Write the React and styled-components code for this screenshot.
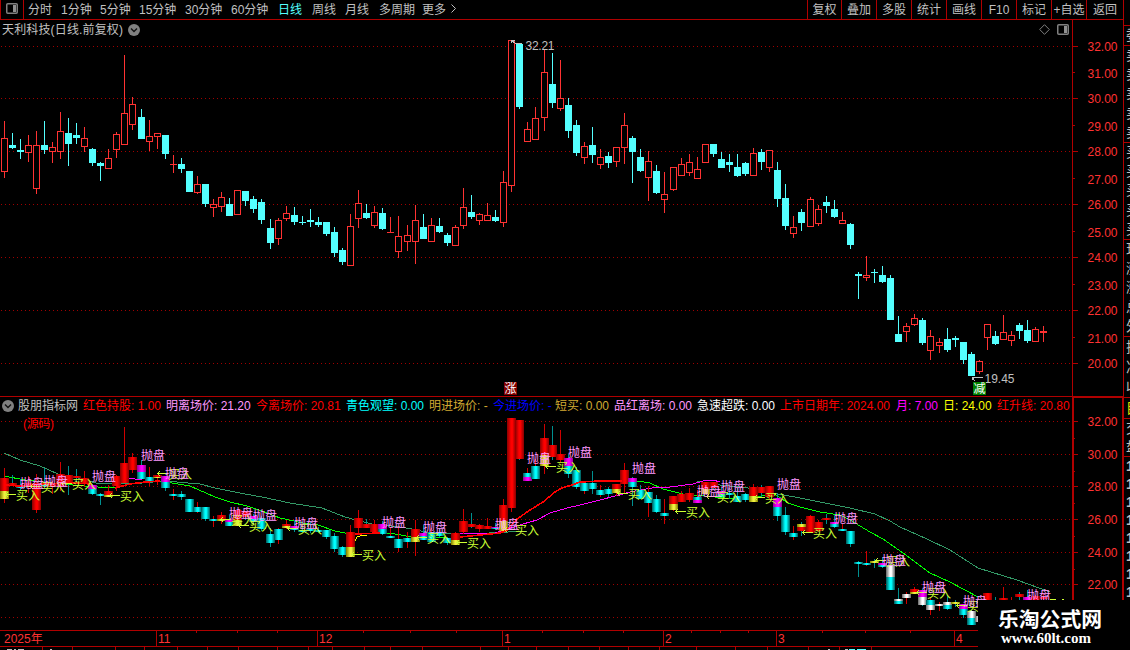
import React from 'react';
import styled, { createGlobalStyle } from 'styled-components';

const GlobalStyle = createGlobalStyle`
  body {
    margin: 0;
    background: #000;
    overflow: hidden;
  }
`;

const LINE = '#b00000';
const UP = '#ff3232';
const DOWN = '#54ffff';

const Window = styled.div`
  position: relative;
  display: flex;
  width: 1130px;
  height: 650px;
  overflow: hidden;
  background: #000;
  color: #c0c0c0;
  font: 12px/18px 'Liberation Sans', 'Noto Sans CJK SC', sans-serif;
  white-space: pre;
`;

const Main = styled.div`
  display: flex;
  flex-direction: column;
  width: 1123px;
`;

const Toolbar = styled.div`
  display: flex;
  box-sizing: border-box;
  height: 20px;
  padding-top: 1px;
  border-bottom: 1px solid ${LINE};
`;

const PanelToggle = styled.div`
  display: flex;
  align-items: center;
  justify-content: center;
  box-sizing: border-box;
  width: 24px;
  margin: -1px 4px 0 0;
  padding-bottom: 2px;
  border: solid ${LINE};
  border-width: 0 1px;
`;

const Period = styled.span`
  width: ${props => props.width}px;
  color: ${props => (props.active ? DOWN : 'inherit')};
`;

const Actions = styled.div`
  display: flex;
  margin: -1px 0 0 auto;
`;

const Action = styled.span`
  box-sizing: border-box;
  width: ${props => props.width || 35}px;
  padding-top: 1px;
  border-left: 1px solid ${LINE};
  text-align: center;
`;

const TitleBar = styled.div`
  display: flex;
  align-items: center;
  gap: 5px;
  box-sizing: border-box;
  width: 1073px;
  height: 20px;
  padding: 0 3px 1px 2px;
  border-right: 1px solid ${LINE};
`;

const Title = styled.span`
  letter-spacing: 0.15px;
`;

const TitleIcons = styled.div`
  display: flex;
  align-items: center;
  gap: 7px;
  margin-left: auto;
`;

const Chart = styled.svg`
  display: block;
  flex: none;
  font: 12px 'Liberation Sans', 'Noto Sans CJK SC', sans-serif;
`;

const Legend = styled.div`
  display: flex;
  align-items: center;
  box-sizing: border-box;
  width: 1074px;
  height: 18px;
  padding: 0 0 1px 2px;
  border-right: 2px solid ${LINE};
`;

const LegendItem = styled.span`
  flex: none;
  width: ${props => props.width}px;
  color: ${props => props.color};
`;

const LegendRow = styled.div`
  display: flex;
  height: 18px;
  flex: none;
`;

const AxisTop = styled.div`
  flex: 1;
  box-sizing: border-box;
  border: solid ${LINE};
  border-width: 1px 1px 0 0;
`;

const DateAxis = styled.div`
  display: flex;
  box-sizing: border-box;
  height: 17px;
  border: solid ${LINE};
  border-width: 1px 0;
  color: ${UP};
  line-height: 16px;
`;

const Month = styled.span`
  box-sizing: border-box;
  width: ${props => props.width}px;
  padding-left: ${props => (props.first ? 4 : 1)}px;
  border-left: ${props => (props.first ? 'none' : `1px solid ${LINE}`)};
`;

const Strip = styled.div`
  display: flex;
  flex-direction: column;
  box-sizing: border-box;
  width: 7px;
  overflow: hidden;
  border-left: 1px solid ${LINE};
`;

const StripGroup = styled.div`
  display: flex;
  flex-direction: column;
  justify-content: space-around;
  flex: none;
  box-sizing: border-box;
  height: ${props => props.height}px;
  padding-left: 2px;
  border-bottom: 1px solid ${LINE};
  color: ${props => props.color || '#c0c0c0'};
  font-size: 14px;
  font-weight: ${props => (props.bold ? 'bold' : 'normal')};
  line-height: 17px;
`;

const Watermark = styled.div`
  position: absolute;
  left: 978px;
  top: 600px;
  display: flex;
  flex-direction: column;
  box-sizing: border-box;
  width: 152px;
  height: 50px;
  padding: 7px 0 0 20px;
  background: #000;
  color: #fff;
`;

const SiteName = styled.span`
  font: bold 20.8px/23px 'Noto Sans CJK SC', sans-serif;
`;

const SiteUrl = styled.span`
  padding-left: 3px;
  font: bold 15px/17px 'Liberation Serif', serif;
`;

const periods = [
  ['分时', 33],
  ['1分钟', 39],
  ['5分钟', 39],
  ['15分钟', 46],
  ['30分钟', 46],
  ['60分钟', 47],
  ['日线', 34],
  ['周线', 33],
  ['月线', 34],
  ['多周期', 43],
  ['更多', 28],
];

const actions = ['复权', '叠加', '多股', '统计', '画线', 'F10', '标记', '+自选', '返回'];

const legend = [
  ['股朋指标网', 65, '#c0c0c0'],
  ['红色持股: 1.00', 83, '#ff0000'],
  ['明离场价: 21.20', 90, '#ff99ff'],
  ['今离场价: 20.81', 90, '#ff0000'],
  ['青色观望: 0.00', 83, '#00ffff'],
  ['明进场价: -', 64, '#d2aa32'],
  ['今进场价: -', 62, '#0000ff'],
  ['短买: 0.00', 59, '#d2aa32'],
  ['品红离场: 0.00', 83, '#ff99ff'],
  ['急速超跌: 0.00', 83, '#ffffff'],
  ['上市日期年: 2024.00', 116, '#ff0000'],
  ['月: 7.00', 47, '#ff00ff'],
  ['日: 24.00', 54, '#ffff00'],
  ['红升线: 20.80', 74, '#ff0000'],
];

// wick top, body top, body bottom, wick bottom, direction, signal colours
const candles = [
  [121, 138, 172, 178, 'r', 'RY'], [133, 145, 148, 149, 'c', 'R'],
  [139, 150, 152, 159, 'c', 'C'], [135, 145, 153, 162, 'r', 'RY'],
  [131, 145, 189, 194, 'r', 'R'], [121, 145, 150, 154, 'c', 'MC'],
  [142, 147, 152, 163, 'r', 'RY'], [112, 131, 152, 159, 'r', 'R'],
  [118, 133, 144, 166, 'c', 'R'], [123, 135, 138, 144, 'c', 'R'],
  [127, 138, 147, 152, 'r', 'R'], [148, 149, 163, 166, 'c', 'MC'],
  [162, 163, 166, 181, 'c', 'C'], [149, 158, 169, 169, 'r', 'RY'],
  [132, 134, 150, 158, 'r', 'R'], [55, 113, 145, 145, 'r', 'R'],
  [97, 104, 125, 130, 'r', 'R'], [109, 117, 139, 139, 'c', 'MC'],
  [120, 136, 142, 151, 'r', 'C'], [133, 133, 137, 149, 'r', 'RY'],
  [135, 135, 154, 159, 'c', 'MC'], [155, 164, 165, 173, 'r', 'C'],
  [158, 164, 169, 173, 'c', 'C'], [171, 171, 192, 192, 'c', 'C'],
  [176, 184, 193, 194, 'r', 'C'], [184, 184, 204, 207, 'c', 'C'],
  [199, 204, 208, 217, 'r', 'C'], [192, 197, 207, 212, 'r', 'RY'],
  [198, 204, 216, 216, 'c', 'MC'], [190, 190, 215, 215, 'r', 'RY'],
  [191, 191, 201, 206, 'c', 'R'], [196, 199, 209, 213, 'c', 'MC'],
  [199, 202, 220, 224, 'c', 'C'], [219, 228, 243, 249, 'c', 'C'],
  [218, 220, 239, 245, 'r', 'C'], [206, 213, 219, 221, 'r', 'RY'],
  [207, 215, 222, 225, 'c', 'MC'], [216, 222, 223, 225, 'c', 'C'],
  [209, 220, 222, 227, 'c', 'C'], [217, 222, 225, 227, 'c', 'C'],
  [222, 222, 234, 236, 'c', 'C'], [227, 232, 253, 257, 'c', 'C'],
  [248, 250, 262, 265, 'c', 'C'], [214, 226, 266, 266, 'r', 'RY'],
  [190, 203, 219, 228, 'r', 'R'], [204, 213, 218, 219, 'c', 'R'],
  [206, 212, 226, 228, 'r', 'R'], [208, 213, 229, 230, 'c', 'MC'],
  [217, 232, 233, 233, 'r', 'C'], [216, 236, 252, 258, 'r', 'C'],
  [225, 235, 242, 251, 'r', 'C'], [205, 220, 242, 264, 'r', 'RY'],
  [214, 227, 239, 239, 'c', 'MC'], [218, 225, 242, 242, 'r', 'C'],
  [218, 226, 232, 233, 'c', 'C'], [233, 235, 243, 246, 'c', 'C'],
  [225, 227, 246, 246, 'r', 'RY'], [188, 207, 226, 229, 'r', 'R'],
  [195, 212, 217, 219, 'c', 'R'], [213, 214, 221, 225, 'r', 'R'],
  [203, 215, 221, 221, 'r', 'R'], [210, 217, 221, 222, 'c', 'MC'],
  [171, 182, 223, 227, 'r', 'RY'], [40, 40, 186, 192, 'r', 'R'],
  [43, 44, 107, 109, 'c', 'R'], [122, 129, 142, 142, 'r', 'CM'],
  [107, 118, 140, 140, 'r', 'C'], [50, 72, 118, 131, 'r', 'RY'],
  [53, 84, 103, 108, 'c', 'R'], [60, 98, 109, 111, 'r', 'R'],
  [98, 105, 131, 138, 'c', 'MC'], [120, 125, 153, 156, 'c', 'C'],
  [142, 146, 158, 164, 'r', 'C'], [127, 145, 155, 163, 'c', 'C'],
  [149, 157, 165, 169, 'r', 'C'], [152, 156, 163, 168, 'c', 'C'],
  [147, 147, 162, 167, 'r', 'RY'], [113, 125, 148, 164, 'r', 'R'],
  [136, 138, 152, 183, 'c', 'MC'], [149, 157, 171, 172, 'c', 'C'],
  [151, 161, 178, 201, 'r', 'C'], [165, 171, 193, 194, 'c', 'C'],
  [172, 194, 200, 213, 'r', 'C'], [167, 167, 190, 191, 'r', 'RY'],
  [158, 164, 176, 176, 'r', 'R'], [154, 162, 173, 176, 'r', 'R'],
  [157, 169, 179, 179, 'r', 'CM'], [144, 144, 163, 163, 'r', 'RY'],
  [144, 144, 154, 157, 'c', 'R'], [152, 159, 168, 168, 'c', 'MC'],
  [154, 162, 165, 172, 'c', 'C'], [154, 167, 176, 177, 'c', 'C'],
  [162, 163, 174, 176, 'c', 'C'], [148, 153, 176, 176, 'r', 'RY'],
  [149, 152, 162, 170, 'c', 'R'], [150, 150, 168, 172, 'r', 'R'],
  [162, 170, 199, 207, 'c', 'MC'], [184, 198, 226, 230, 'c', 'C'],
  [216, 227, 234, 238, 'r', 'C'], [209, 212, 223, 231, 'c', 'YR'],
  [197, 199, 227, 227, 'r', 'R'], [205, 209, 224, 226, 'r', 'R'],
  [196, 202, 206, 213, 'c', 'R'], [200, 209, 217, 218, 'c', 'MC'],
  [212, 220, 224, 224, 'r', 'C'], [223, 224, 245, 249, 'c', 'C'],
  [272, 274, 276, 299, 'c', 'C'], [256, 275, 278, 281, 'r', 'C'],
  [269, 272, 273, 283, 'c', 'Y'], [266, 275, 282, 283, 'c', 'MC'],
  [275, 278, 320, 320, 'c', 'WC'], [316, 334, 342, 342, 'c', 'WC'],
  [323, 326, 332, 342, 'r', 'W'], [314, 318, 325, 326, 'r', 'RY'],
  [318, 320, 343, 345, 'c', 'MW'], [330, 336, 351, 360, 'r', 'CW'],
  [338, 342, 346, 353, 'r', 'W'], [328, 339, 350, 352, 'c', 'WC'],
  [336, 338, 340, 347, 'c', 'Y'], [342, 342, 360, 364, 'c', 'MC'],
  [352, 354, 376, 376, 'c', 'WC'], [360, 361, 372, 374, 'r', 'W'],
  [324, 324, 338, 350, 'r', 'R'], [331, 336, 344, 345, 'c', 'R'],
  [315, 332, 340, 340, 'r', 'R'], [331, 335, 341, 346, 'r', 'R'],
  [323, 325, 331, 339, 'c', 'R'], [320, 330, 341, 343, 'c', 'MC'],
  [327, 329, 342, 342, 'r', 'R'], [326, 331, 333, 342, 'r', 'R'],
];

// one extra pixel is inserted wherever the fractional bar pitch rolls over
const shifts = [17, 33, 50, 67, 83, 100, 116];
const candleX = i => 4 + i * 8 + shifts.filter(s => i >= s).length;
const signalY = y => Math.round(421.5 + (y - 46) * 0.6165);

const gradients = {
  R: ['#960000', '#ff0000'],
  C: ['#006a6a', '#00ffff'],
  Y: ['#8a8a00', '#f0f040'],
  M: ['#a000a0', '#ff00ff'],
  W: ['#777777', '#ffffff'],
};

const sellMarks = [
  [20, 487], [44, 485], [92, 480], [141, 459], [165, 477], [229, 517], [253, 519],
  [294, 527], [382, 526], [423, 531], [495, 528], [527, 462], [568, 456],
  [632, 472], [697, 495], [721, 490], [777, 488], [834, 522], [882, 564],
  [922, 591], [963, 605], [1027, 599],
];

const buyMarks = [
  [16, 499], [41, 491], [72, 488], [120, 500], [168, 478], [231, 524], [249, 530],
  [298, 533], [362, 559], [427, 542], [467, 547], [515, 534], [556, 471],
  [628, 498], [686, 516], [717, 501], [765, 502], [813, 537], [886, 565],
  [927, 597], [967, 610],
];

const averages = [
  ['#339966', '4,453 20,460 40,466 58,474 75,477 96,483 130,484 165,481 200,484 215,488 245,494 262,497 290,503 322,508 345,517 356,520 372,524 400,527 412,529 430,533 470,534 527,531'],
  ['#339966', '697,481 720,485 740,487 755,489 773,493 800,498 830,504 850,508 875,514 890,521 900,527 927,539 950,550 978,568 1017,580 1050,592'],
  ['#00ff00', '4,476 25,480 60,484 98,487 117,487'],
  ['#00ff00', '160,481 172,483 190,486 215,497 230,502 247,506 262,511 280,518 303,523 318,525 335,531 345,533 375,533 395,534 412,537 430,537 447,538'],
  ['#00ff00', '600,481 637,481 650,483 663,489 683,494 705,496 745,500 773,493 788,503 800,507 820,512 840,515 850,520 870,532 883,539 903,553 930,573 950,582 978,597'],
  ['#ff00ff', '128,478 142,480'],
  ['#ff00ff', '460,533 495,533 523,524 537,520 550,513 567,508 580,505 600,500 630,492 652,488 670,487 693,484 703,481 713,480 720,482'],
];

const risingLines = [
  '4,485 20,486 45,484 75,483 92,484',
  '115,488 130,484 145,482 160,481',
  '355,534 380,533',
  '460,537 480,535 500,533 507,530 517,519 530,510 543,502 555,492 562,488 572,485 580,482 600,481 622,481',
];

const monthTicks = [196, 237, 277, 363, 410, 456, 542, 583, 623, 691, 720, 748, 822, 865, 910];
const statusTicks = [
  42, 72, 115, 144, 177, 207, 238, 277, 308, 332, 364, 390, 422, 480, 508, 536,
  568, 599, 628, 659, 696, 735, 767, 808, 839, 871,
];

const GridLine = ({ y }) => (
  <line x1="1" x2="1070" y1={y + 0.5} y2={y + 0.5} stroke="#a00000" strokeDasharray="1 3" />
);

const PriceLabel = ({ y, children }) => (
  <text x="1087.5" y={y} fill={UP} textLength="30">
    {children}
  </text>
);

const ChevronBadge = () => (
  <svg width="12" height="12" display="block">
    <circle cx="6" cy="6" r="6" fill="#808080" />
    <path d="M3 4.5L6 7.5L9 4.5" fill="none" stroke="#111" strokeWidth="1.4" />
  </svg>
);

const PanelIcon = () => (
  <svg width="12" height="11">
    <rect x="0.75" y="0.75" width="10.5" height="9.5" rx="1" fill="none" stroke="#808080" strokeWidth="1.5" />
    <rect x="7" y="2" width="3" height="7" fill="#909090" />
  </svg>
);

const Candle = ({ index, data }) => {
  const [wickTop, top, bottom, wickBottom, dir] = data;
  const x = candleX(index);
  const color = dir === 'r' ? UP : DOWN;
  const hollow = dir === 'r' && bottom - top > 2;
  return (
    <g fill={color}>
      <rect x={x} y={wickTop} width="1" height={wickBottom - wickTop} />
      {hollow ? (
        <rect x={x - 2.5} y={top + 0.5} width="6" height={bottom - top - 1} fill="#000" stroke={color} />
      ) : (
        <rect x={x - 3} y={top} width="7" height={bottom - top} />
      )}
    </g>
  );
};

const SignalCandle = ({ index, data }) => {
  const [wickTop, top, bottom, wickBottom, dir, tones] = data;
  const x = candleX(index);
  const y1 = Math.max(418, signalY(top));
  const y2 = Math.max(y1 + 2, signalY(bottom));
  const w1 = Math.max(418, signalY(wickTop));
  const ratio = tones[1] === 'Y' ? 0.6 : 0.48;
  const split = tones.length > 1 ? Math.round(y1 + (y2 - y1) * ratio) : y2;
  return (
    <g>
      <rect x={x} y={w1} width="1" height={Math.max(1, signalY(wickBottom) - w1)} fill={dir === 'r' ? '#d00000' : '#009090'} />
      <rect x={x - 4} y={y1} width="9" height={split - y1} fill={`url(#tone${tones[0]})`} />
      {tones.length > 1 && (
        <rect x={x - 4} y={split} width="9" height={y2 - split} fill={`url(#tone${tones[1]})`} />
      )}
    </g>
  );
};

const PriceChart = () => (
  <Chart width="1123" height="357" viewBox="0 40 1123 357" shapeRendering="crispEdges">
    {[46, 98, 151, 204, 257, 310, 363].map((y, i) => (
      <g key={y}>
        <GridLine y={y} />
        <rect x="1073" y={y} width="5" height="1" fill={LINE} />
        <PriceLabel y={y + 5}>{`${32 - i * 2}.00`}</PriceLabel>
      </g>
    ))}
    {[72, 125, 178, 231, 284, 337].map((y, i) => (
      <g key={y}>
        <rect x="1073" y={y} width="2" height="1" fill={LINE} />
        <PriceLabel y={y + 6}>{`${31 - i * 2}.00`}</PriceLabel>
      </g>
    ))}
    <rect x="1072" y="40" width="1" height="357" fill={LINE} />
    {candles.map((data, i) => (
      <Candle key={i} index={i} data={data} />
    ))}
    <path d="M522 43.5H516L511 40.5M515 40.5H511.5V43" fill="none" stroke="#c0c0c0" />
    <text x="525.5" y="50" fill="#c0c0c0" textLength="29">32.21</text>
    <path d="M983 377.5H972M975 381L972 377.5V380" fill="none" stroke="#c0c0c0" />
    <text x="984.5" y="383" fill="#c0c0c0" textLength="30">19.45</text>
    <rect x="504" y="382" width="13" height="13" fill="#800000" />
    <text x="504.5" y="393" fill="#fff">涨</text>
    <rect x="973" y="382" width="13" height="13" fill="#008000" />
    <text x="973.5" y="393" fill="#fff">减</text>
    <rect x="0" y="396" width="1123" height="1" fill={LINE} />
  </Chart>
);

const SignalChart = () => (
  <Chart width="1123" height="215" viewBox="0 415 1123 215" shapeRendering="crispEdges">
    <defs>
      {Object.entries(gradients).map(([name, [edge, center]]) => (
        <linearGradient key={name} id={`tone${name}`}>
          <stop offset="0.05" stopColor={edge} />
          <stop offset="0.45" stopColor={center} />
          <stop offset="0.6" stopColor={center} />
          <stop offset="0.95" stopColor={edge} />
        </linearGradient>
      ))}
    </defs>
    {[421, 454, 486, 519, 552, 584, 617].map((y, i) => (
      <g key={y}>
        <GridLine y={y} />
        <rect x="1074" y={y} width="4" height="1" fill={LINE} />
        <rect x="1074" y={y + 17} width="1" height="1" fill={LINE} />
        <PriceLabel y={y + 5}>{`${32 - i * 2}.00`}</PriceLabel>
      </g>
    ))}
    <rect x="1072" y="415" width="2" height="215" fill={LINE} />
    <rect x="1122" y="415" width="1" height="215" fill={LINE} />
    <text x="23" y="428" fill="#ff0000" textLength="31">(源码)</text>
    {averages.map(([stroke, points]) => (
      <polyline key={points} points={points} fill="none" stroke={stroke} />
    ))}
    {candles.map((data, i) => (
      <SignalCandle key={i} index={i} data={data} />
    ))}
    {risingLines.map(points => (
      <polyline key={points} points={points} fill="none" stroke="#ff0000" strokeWidth="1.6" />
    ))}
    <polyline points="355,541 357,537 361,535.5 367,535.5" fill="none" stroke="#ffff00" />
    {buyMarks.map(([x, y]) => (
      <g key={x}>
        <path d={`M${x} ${y - 4.5}H${x - 10}M${x - 8} ${y - 7}L${x - 10.5} ${y - 4.5}L${x - 8} ${y - 2}`} fill="none" stroke="#ccff33" />
        <text x={x} y={y + 1} fill="#ccff33" textLength="24">买入</text>
      </g>
    ))}
    {sellMarks.map(([x, y]) => (
      <text key={x} x={x} y={y + 1} fill="#ff99ff" textLength="24">抛盘</text>
    ))}
    <path d="M1050 599.5H1056M1062 599.5H1064" stroke="#ccff33" />
  </Chart>
);

const App = () => (
  <Window>
    <GlobalStyle />
    <Main>
      <Toolbar>
        <PanelToggle>
          <PanelIcon />
        </PanelToggle>
        {periods.map(([label, width]) => (
          <Period key={label} width={width} active={label === '日线' ? 1 : undefined}>
            {label}
          </Period>
        ))}
        <svg width="8" height="18">
          <path d="M1.5 3.5L5.5 7.5L1.5 11.5" fill="none" stroke="#c0c0c0" />
        </svg>
        <Actions>
          {actions.map((label, i) => (
            <Action key={label} width={i === 0 ? 34 : i === 8 ? 37 : 35}>
              {label}
            </Action>
          ))}
        </Actions>
      </Toolbar>
      <TitleBar>
        <Title>天利科技(日线.前复权)</Title>
        <ChevronBadge />
        <TitleIcons>
          <svg width="11" height="11">
            <path d="M5.5 0.7L10.3 5.5L5.5 10.3L0.7 5.5Z" fill="none" stroke="#808080" />
          </svg>
          <PanelIcon />
        </TitleIcons>
      </TitleBar>
      <PriceChart />
      <LegendRow>
        <Legend>
          <LegendItem width={16}>
            <ChevronBadge />
          </LegendItem>
          {legend.map(([label, width, color]) => (
            <LegendItem key={label} width={width} color={color}>
              {label}
            </LegendItem>
          ))}
        </Legend>
        <AxisTop />
      </LegendRow>
      <SignalChart />
      <DateAxis>
        <Month first width={156}>2025年</Month>
        <Month width={161}>11</Month>
        <Month width={185}>12</Month>
        <Month width={161}>1</Month>
        <Month width={113}>2</Month>
        <Month width={178}>3</Month>
        <Month width={169}>4</Month>
      </DateAxis>
      <Chart width="1123" height="3" shapeRendering="crispEdges" overflow="visible">
        {monthTicks.map(x => (
          <rect key={x} x={x} y="-16" width="1" height="2" fill={LINE} />
        ))}
        {statusTicks.map(x => (
          <rect key={x} x={x} y="0" width="1" height="3" fill={LINE} />
        ))}
        <path d="M7 2.5H12M14 2.5H16M18 2.5H24M50 2.5H52M828 2.5H830M845 2.5H848" stroke="#c0c0c0" />
        <path d="M849 2.5H855M857 2.5H866" stroke={DOWN} />
      </Chart>
    </Main>
    <Strip>
      <StripGroup height={26} />
      <StripGroup height={20}>
        <span>委</span>
      </StripGroup>
      <StripGroup height={97}>
        {['五', '四', '三', '二', '一'].map(n => (
          <span key={n}>卖</span>
        ))}
      </StripGroup>
      <StripGroup height={97}>
        {['一', '二', '三', '四', '五'].map(n => (
          <span key={n}>买</span>
        ))}
      </StripGroup>
      <StripGroup height={97}>
        <span>现</span>
        <span>涨</span>
        <span>涨</span>
        <span>总</span>
        <span>外</span>
      </StripGroup>
      <StripGroup height={61}>
        <span>换</span>
        <span>净</span>
        <span>收</span>
      </StripGroup>
      <StripGroup height={21} color="#e0e000">
        <span>目</span>
      </StripGroup>
      <StripGroup height={38}>
        <span>交</span>
        <span>盘</span>
      </StripGroup>
      <StripGroup height={145} bold>
        {[0, 1, 2, 3, 4, 5, 6, 7].map(n => (
          <span key={n}>1</span>
        ))}
      </StripGroup>
    </Strip>
    <Watermark>
      <SiteName>乐淘公式网</SiteName>
      <SiteUrl>www.60lt.com</SiteUrl>
    </Watermark>
  </Window>
);

export default App;
